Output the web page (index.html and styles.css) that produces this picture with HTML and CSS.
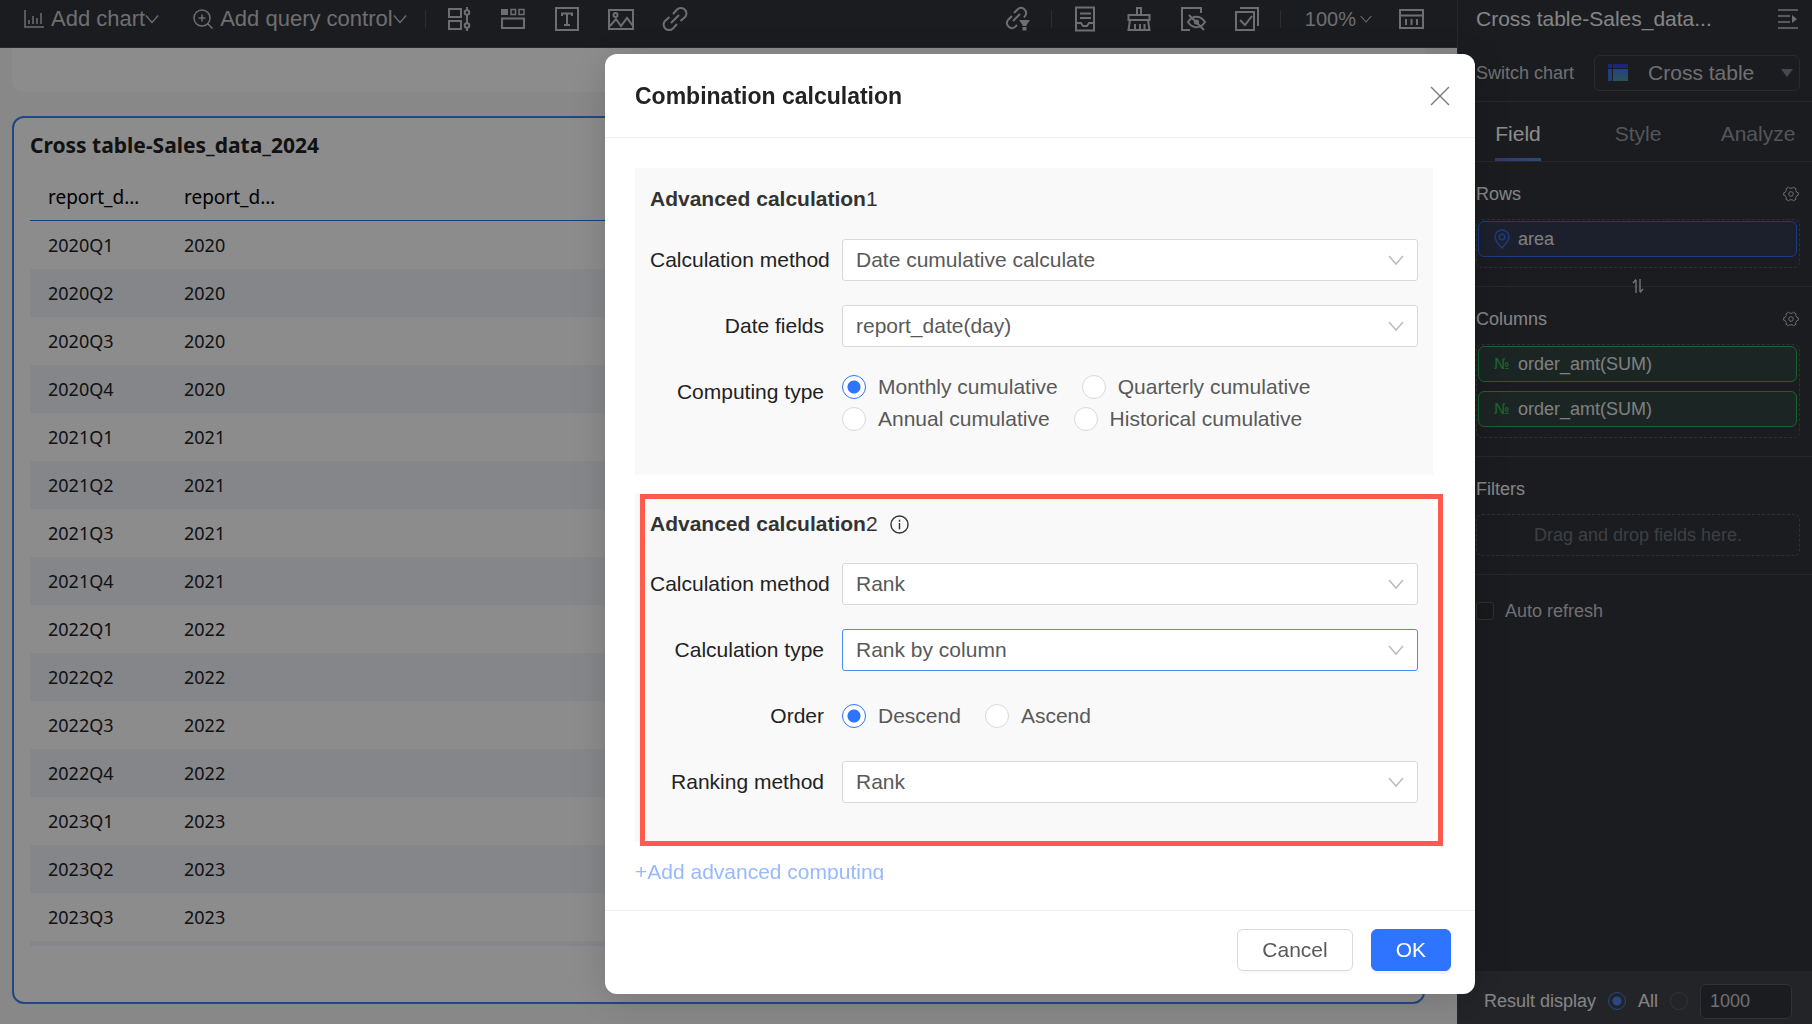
FILE: index.html
```html
<!DOCTYPE html>
<html lang="en">
<head>
<meta charset="utf-8">
<title>Cross table-Sales_data_2024</title>
<link rel="stylesheet" href="styles.css">
</head>
<body>
<svg class="sprite" aria-hidden="true">
  <symbol id="chevron" viewBox="0 0 16 16"><path d="M1 4l7 8 7-8"/></symbol>
  <symbol id="gear" viewBox="0 0 16 16"><path d="M5.6 1.2L6.8 2.2h2.4l1.2-1 2.6 1.5-.3 1.6 1.1 2 1.5.5v2.4l-1.5.5-1.1 2 .3 1.6-2.6 1.5-1.2-1H6.800l-1.200 1L3 13.300l.3-1.600-1.100-2L.7 9.200V6.800l1.500-.5 1.100-2L3 2.700z"/><circle cx="8" cy="8" r="2.300"/></symbol>
</svg>

<div class="app">
  <main class="workspace">
    <header class="toolbar">
      <button class="tool-menu" type="button">
        <svg class="icon-menu" viewBox="0 0 20 20"><path d="M1 1v17h19M5 15v-4M9 15V7M13 15V9M17 15V4"/></svg>
        <span>Add chart</span>
        <svg class="caret"><use href="#chevron"/></svg>
      </button>
      <button class="tool-menu" type="button">
        <svg class="icon-menu" viewBox="0 0 20 20"><circle cx="9" cy="9" r="8"/><path d="M14.500 14.500l5 5M9 5.500v7M5.500 9h7"/></svg>
        <span>Add query control</span>
        <svg class="caret"><use href="#chevron"/></svg>
      </button>
      <i class="sep"></i>
      <div class="tool-icons">
        <button type="button" aria-label="Filter control"><svg viewBox="0 0 26 26"><path d="M3 3h12v8H3zM3 15h12v8H3zM21 1v3M21 9v8M21 22v3"/><circle cx="21" cy="6.500" r="2.300"/><circle cx="21" cy="19.500" r="2.300"/></svg></button>
        <button type="button" aria-label="Tabs"><svg viewBox="0 0 26 26"><path class="solid" d="M1 3h7v6H1z"/><path class="thin" d="M11 3.500h4.500v5H11zM19 3.500h5v5h-5z"/><path d="M2 12.500h22v9.500H2z"/></svg></button>
        <button type="button" aria-label="Text"><svg viewBox="0 0 26 26"><path d="M2 2h22v22H2zM8 10V7.500h10V10M13 7.500V19M10 19h6"/></svg></button>
        <button type="button" aria-label="Picture"><svg viewBox="0 0 26 26"><path d="M1 4h24v19H1zM2 20l6-7 5 7 6-8 6 8"/><circle cx="7.500" cy="9" r="2"/></svg></button>
        <button type="button" aria-label="Link"><svg viewBox="0 0 26 26"><path d="M9 17l8-8M11 8l4-4.500a5.500 5.500 0 0 1 7.800 7.800L18.500 15M15 18l-4 4.500a5.500 5.500 0 0 1-7.800-7.800L7.500 11"/></svg></button>
      </div>
      <div class="tool-right">
        <button type="button" aria-label="Linked filter"><svg viewBox="0 0 26 26"><path d="M8 15l7-7M9 7l4-4a5 5 0 0 1 7 7l-1 1.500M12 19l-2 2a5 5 0 0 1-7-7l4-4"/><path class="solid" d="M14 14h11l-3.500 5v1h-4v-1zM17.500 21h4v3.500h-4z"/></svg></button>
        <i class="sep"></i>
        <div class="tool-icons">
          <button type="button" aria-label="Page"><svg viewBox="0 0 26 26"><path d="M4 1.500h18v23H4zM8 7.500h11M8 12h11M4 17h5l2 3h4l2-3h5"/></svg></button>
          <button type="button" aria-label="Clear"><svg viewBox="0 0 26 26"><path d="M11 9V2h4v7M2.500 14V9h21v5zM4 14L2.500 24h21L22 14M9 24v-6M14 24v-6M18.500 24v-6"/></svg></button>
          <button type="button" aria-label="Hidden items"><svg viewBox="0 0 26 26"><path d="M10 24H2V2h19v5M8 16c4.500-7 12.500-7 17 0-4.500 7-12.500 7-17 0zM9 9l15 15"/><circle class="solid" cx="16.500" cy="16" r="2.600"/></svg></button>
          <button type="button" aria-label="Select"><svg viewBox="0 0 26 26"><path d="M2 6h18v18H2zM6 2h18v18M6 14l5 5 7-9"/></svg></button>
        </div>
        <i class="sep"></i>
        <button class="zoom" type="button"><span>100%</span><svg class="caret-small"><use href="#chevron"/></svg></button>
        <button class="grid-tool" type="button" aria-label="Layout"><svg viewBox="0 0 26 26"><path d="M2 4h23v18H2zM2 9.500h23M8 13v6M13.500 13v6M19 13v6"/></svg></button>
      </div>
    </header>

    <section class="canvas">
      <div class="card-previous"></div>
      <article class="card">
        <h2 class="card-title">Cross table-Sales_data_2024</h2>
        <div class="table-view">
          <table>
            <colgroup><col class="col-key"><col></colgroup>
            <thead><tr><th>report_d…</th><th>report_d…</th></tr></thead>
            <tbody>
              <tr><td>2020Q1</td><td>2020</td></tr>
              <tr><td>2020Q2</td><td>2020</td></tr>
              <tr><td>2020Q3</td><td>2020</td></tr>
              <tr><td>2020Q4</td><td>2020</td></tr>
              <tr><td>2021Q1</td><td>2021</td></tr>
              <tr><td>2021Q2</td><td>2021</td></tr>
              <tr><td>2021Q3</td><td>2021</td></tr>
              <tr><td>2021Q4</td><td>2021</td></tr>
              <tr><td>2022Q1</td><td>2022</td></tr>
              <tr><td>2022Q2</td><td>2022</td></tr>
              <tr><td>2022Q3</td><td>2022</td></tr>
              <tr><td>2022Q4</td><td>2022</td></tr>
              <tr><td>2023Q1</td><td>2023</td></tr>
              <tr><td>2023Q2</td><td>2023</td></tr>
              <tr><td>2023Q3</td><td>2023</td></tr>
              <tr><td></td><td></td></tr>
            </tbody>
          </table>
        </div>
      </article>
    </section>
  </main>

  <aside class="inspector">
    <header class="inspector-head">
      <h2>Cross table-Sales_data...</h2>
      <button type="button" aria-label="Collapse panel"><svg viewBox="0 0 20 20"><path d="M0 1h20M0 7h12M0 13h12M0 19h20"/><path class="solid" d="M14 6l5 4-5 4z"/></svg></button>
    </header>
    <div class="switch-row">
      <label for="chart-type">Switch chart</label>
      <div class="chart-select">
        <svg class="chart-glyph" viewBox="0 0 20 18"><path fill="#3344e0" d="M0 0h4v4H0zM5 0h15v4H5z"/><path fill="#3c6fe0" d="M0 5h4v12H0z"/><path fill="url(#sheet)" d="M5 5h15v12H5z"/><defs><linearGradient id="sheet" x1="0" y1="0" x2="0" y2="1"><stop offset="0" stop-color="#4679ec"/><stop offset="1" stop-color="#4a9aa6"/></linearGradient></defs></svg>
        <select id="chart-type"><option>Cross table</option></select>
        <i class="triangle"></i>
      </div>
    </div>
    <nav class="tabs">
      <button class="tab active" type="button"><span>Field</span></button>
      <button class="tab" type="button"><span>Style</span></button>
      <button class="tab" type="button"><span>Analyze</span></button>
    </nav>
    <section class="zone">
      <header><h3>Rows</h3><svg class="gear"><use href="#gear"/></svg></header>
      <div class="drop">
        <div class="chip dimension"><svg viewBox="0 0 16 20"><path d="M8 19C3 14 1 11 1 8a7 7 0 0 1 14 0c0 3-2 6-7 11z"/><circle cx="8" cy="8" r="2.800"/></svg><span>area</span></div>
      </div>
    </section>
    <section class="zone">
      <svg class="swap" viewBox="0 0 12 16"><path d="M4 15V2M1 5l3-3.500M8 1v13M11 11l-3 3.500"/></svg>
      <header><h3>Columns</h3><svg class="gear"><use href="#gear"/></svg></header>
      <div class="drop">
        <div class="chip measure"><b>№</b><span>order_amt(SUM)</span></div>
        <div class="chip measure"><b>№</b><span>order_amt(SUM)</span></div>
      </div>
    </section>
    <section class="zone">
      <header><h3>Filters</h3></header>
      <div class="drop empty">Drag and drop fields here.</div>
    </section>
    <section class="refresh">
      <label><input type="checkbox"><span>Auto refresh</span></label>
    </section>
    <footer class="result">
      <span>Result display</span>
      <label><input type="radio" name="limit" checked><span>All</span></label>
      <input type="radio" name="limit" aria-label="Limit rows">
      <input class="limit" type="text" value="1000" aria-label="Row limit">
    </footer>
  </aside>
</div>

<div class="overlay">
  <div class="dialog" role="dialog" aria-labelledby="dialog-title">
    <header class="dialog-head">
      <h1 id="dialog-title">Combination calculation</h1>
      <button type="button" aria-label="Close"><svg viewBox="0 0 20 20"><path d="M1 1l18 18M19 1L1 19"/></svg></button>
    </header>
    <div class="dialog-body">
      <div class="dialog-scroll">
        <section class="calc">
          <h2>Advanced calculation<span>1</span></h2>
          <div class="field">
            <label for="method-1">Calculation method</label>
            <div class="select"><select id="method-1"><option>Date cumulative calculate</option></select><svg><use href="#chevron"/></svg></div>
          </div>
          <div class="field">
            <label for="date-field">Date fields</label>
            <div class="select"><select id="date-field"><option>report_date(day)</option></select><svg><use href="#chevron"/></svg></div>
          </div>
          <div class="field">
            <span class="label" id="computing">Computing type</span>
            <div class="radios" role="radiogroup" aria-labelledby="computing">
              <div><label><input type="radio" name="computing" checked><span>Monthly cumulative</span></label><label><input type="radio" name="computing"><span>Quarterly cumulative</span></label></div>
              <div><label><input type="radio" name="computing"><span>Annual cumulative</span></label><label><input type="radio" name="computing"><span>Historical cumulative</span></label></div>
            </div>
          </div>
        </section>
        <section class="calc marked">
          <h2>Advanced calculation<span>2</span><svg class="info" viewBox="0 0 20 20"><circle cx="10" cy="10" r="9"/><path d="M10 8.500V15M10 5v2"/></svg></h2>
          <div class="field">
            <label for="method-2">Calculation method</label>
            <div class="select"><select id="method-2"><option>Rank</option></select><svg><use href="#chevron"/></svg></div>
          </div>
          <div class="field">
            <label for="calc-type">Calculation type</label>
            <div class="select focused"><select id="calc-type"><option>Rank by column</option></select><svg><use href="#chevron"/></svg></div>
          </div>
          <div class="field">
            <span class="label" id="order">Order</span>
            <div class="radios single" role="radiogroup" aria-labelledby="order">
              <div><label><input type="radio" name="order" checked><span>Descend</span></label><label><input type="radio" name="order"><span>Ascend</span></label></div>
            </div>
          </div>
          <div class="field">
            <label for="ranking">Ranking method</label>
            <div class="select"><select id="ranking"><option>Rank</option></select><svg><use href="#chevron"/></svg></div>
          </div>
        </section>
        <a class="add" href="#">+Add advanced computing</a>
      </div>
    </div>
    <footer class="dialog-foot">
      <button class="btn" type="button">Cancel</button>
      <button class="btn primary" type="button">OK</button>
    </footer>
  </div>
</div>
</body>
</html>
```
FILE: styles.css
```css
* { box-sizing: border-box; }

body {
  margin: 0;
  font: 21px/28px "Liberation Sans", Arial, sans-serif;
  color: #222;
  overflow: hidden;
}

h1, h2, h3 { margin: 0; font: inherit; }
button, input, select { margin: 0; font: inherit; color: inherit; }
button { padding: 0; border: 0; background: none; cursor: pointer; }
svg { display: block; flex: none; fill: none; stroke: currentColor; stroke-width: 1.5; }
.solid { fill: currentColor; stroke: none; }
.thin { stroke-width: 1.5; }
.sprite { position: absolute; width: 0; height: 0; }

.app { display: flex; height: 100vh; }
.workspace { flex: 1; min-width: 0; display: flex; flex-direction: column; }

/* Toolbar */
.toolbar {
  display: flex;
  align-items: center;
  height: 48px;
  padding: 0 33px 10px 24px;
  background: #31333a;
  border-bottom: 1px solid #484a52;
  color: #c8c9cc;
}
.tool-menu { display: flex; align-items: center; margin-right: 34px; font-size: 22px; white-space: nowrap; }
.tool-menu + .sep { margin-left: -16px; }
.icon-menu { width: 20px; height: 20px; margin-right: 7px; }
.caret { width: 14px; height: 14px; }
.caret-small { width: 12px; height: 12px; margin-left: 4px; }
.sep { width: 1px; height: 18px; margin: 0 20px; background: #50525a; }
.tool-icons { display: flex; gap: 28px; }
.tool-icons svg, .tool-right > button > svg:not(.caret-small) { width: 26px; height: 26px; stroke-width: 2; }
.tool-right { display: flex; align-items: center; margin-left: auto; }
.zoom { display: flex; align-items: center; margin: 0 26px 0 4px; font-size: 20px; }

/* Canvas */
.canvas {
  flex: 1;
  min-height: 0;
  display: flex;
  flex-direction: column;
  gap: 24px;
  padding: 0 32px 20px 12px;
  background: #f8f8f8;
}
.card-previous { height: 44px; border-radius: 0 0 12px 12px; background: #fff; }
.card {
  flex: 1;
  min-height: 0;
  display: flex;
  flex-direction: column;
  padding: 13px 16px 56px;
  border: 2px solid #4080f0;
  border-radius: 12px;
  background: #fff;
  font-family: "Noto Sans", sans-serif;
}
.card-title { font-size: 21px; font-weight: 700; margin-bottom: 16px; }
.table-view { flex: 1; overflow: hidden; }
table { width: 100%; table-layout: fixed; border-spacing: 0; font-size: 18px; line-height: 24px; }
.col-key { width: 136px; }
th, td { height: 48px; padding: 0 0 0 18px; text-align: left; font-weight: 400; white-space: nowrap; }
th { height: 46px; padding-bottom: 2px; border-bottom: 1px solid #2e6fee; color: #000; font-size: 19px; }
tbody tr:nth-child(even) { background: #f2f5fc; }

/* Inspector */
.inspector {
  width: 355px;
  display: flex;
  flex-direction: column;
  overflow: hidden;
  border-left: 1px solid #484a52;
  background: #31333a;
  color: #cacbce;
  font-size: 18px;
}
.inspector-head {
  display: flex;
  align-items: center;
  justify-content: space-between;
  padding: 5px 14px 0 18px;
  color: #f0f0f2;
  font-size: 21px;
}
.inspector-head svg { width: 20px; height: 20px; color: #c8c9cc; }
.switch-row {
  display: flex;
  align-items: center;
  gap: 20px;
  padding: 22px 12px 10px 18px;
  border-bottom: 1px solid #46484f;
}
.switch-row label { white-space: nowrap; }
.chart-select {
  flex: 1;
  min-width: 0;
  display: flex;
  align-items: center;
  height: 36px;
  padding: 0 6px 0 13px;
  border: 1px solid #4c4e56;
  border-radius: 6px;
  font-size: 21px;
}
.chart-glyph { width: 20px; height: 18px; margin-right: 20px; stroke: none; }
.chart-select select { flex: 1; min-width: 0; border: 0; background: none; appearance: none; }
.triangle { border: 6px solid transparent; border-top: 8px solid #7e8490; border-bottom: 0; }

.tabs {
  display: flex;
  margin-right: -6px;
  border-bottom: 1px solid #46484f;
  color: #999ba1;
  font-size: 21px;
}
.tab { flex: 1; height: 59px; }
.tab span { display: inline-block; height: 59px; padding-top: 18px; border-bottom: 3px solid transparent; }
.tab.active span { color: #fff; border-image: linear-gradient(90deg, #6562c8, #4a8cd0) 1; }

.zone { position: relative; padding: 16px 12px 18px 18px; border-bottom: 1px solid #46484f; }
.zone header { display: flex; align-items: center; justify-content: space-between; height: 32px; margin-bottom: 9px; color: #f0f0f2; }
.zone:has(.swap) { z-index: 1; }
.gear { width: 16px; height: 16px; margin-right: 1px; color: #c8c9cc; stroke-width: 1; }
.swap { position: absolute; top: -9px; left: 18px; right: 12px; width: 12px; height: 16px; margin: 0 auto; }
.drop { padding: 1px; border: 1px dashed #56585f; border-radius: 6px; }
.drop.empty { height: 42px; text-align: center; line-height: 38px; color: #717379; }
.chip { display: flex; align-items: center; height: 36px; margin: 0 1px 9px 0; padding-left: 15px; border: 1px solid; border-radius: 6px; }
.chip span { color: #e6e7ea; }
.chip b, .chip svg { width: 16px; margin-right: 8px; }
.chip svg { height: 20px; }
.chip b { font: 400 15px/20px "DejaVu Sans", sans-serif; color: #32b454; }
.dimension { color: #2e6fee; background: #333b52; }
.measure { color: #32b454; background: #324440; }

.refresh { padding: 22px 18px; }
.refresh label { display: inline-flex; align-items: center; gap: 11px; }
.refresh input { appearance: none; width: 18px; height: 18px; border: 1px solid #54565e; border-radius: 3px; background: #2c2e33; }

.result {
  display: flex;
  align-items: center;
  gap: 12px;
  height: 53px;
  margin-top: auto;
  padding: 7px 20px 0 26px;
  background: #404249;
  color: #f0f0f2;
  white-space: nowrap;
}
.result label { display: flex; align-items: center; gap: 12px; }
.result input[type="radio"] { width: 18px; height: 18px; flex: none; border-color: #5c5e66; background: #404249; }
.result input[type="radio"]:checked { border-color: #4d80f0; background: radial-gradient(circle, #4d80f0 4px, #404249 5px); }
.result .limit { flex: 1; min-width: 0; height: 35px; padding: 0 9px; border: 1px solid #5a5c64; border-radius: 6px; background: #31333a; color: #cacbce; }

/* Dialog */
.overlay {
  position: fixed;
  inset: 0;
  z-index: 10;
  display: flex;
  justify-content: flex-end;
  padding: 54px 337px 30px 0;
  background: rgba(0, 0, 0, .45);
}
.dialog {
  display: flex;
  flex-direction: column;
  width: 870px;
  border-radius: 12px;
  background: #fff;
  box-shadow: 0 6px 40px rgba(0, 0, 0, .16);
}
.dialog-head {
  display: flex;
  align-items: center;
  justify-content: space-between;
  height: 84px;
  padding: 0 25px 0 30px;
  border-bottom: 1px solid #f0f0f0;
}
.dialog-head h1 { font-size: 23px; font-weight: 700; }
.dialog-head svg { width: 20px; height: 20px; color: #808080; }
.dialog-body { flex: 1; min-height: 0; padding: 30px 42px 30px 30px; }
.dialog-scroll { height: 100%; overflow: hidden; margin-right: -12px; padding-right: 12px; }
.calc { position: relative; padding: 17px 15px 16px; margin-bottom: 18px; background: #f9f9f9; }
.calc h2 { display: flex; align-items: center; font-weight: 700; color: #333; margin-bottom: 26px; }
.calc h2 span { font-weight: 400; }
.calc h2 .info { width: 19px; height: 19px; margin-left: 12px; }
.marked { margin-bottom: 16px; padding-bottom: 15px; }
.marked h2 { margin-bottom: 25px; }
.marked::after {
  content: "";
  position: absolute;
  inset: 1px -10px -4px 5px;
  border: 5px solid #ff5b4c;
}
.field { display: flex; margin-bottom: 24px; }
.field > label, .label { width: 192px; padding-right: 18px; line-height: 42px; text-align: right; white-space: nowrap; }
.select { flex: 1; display: grid; align-items: center; }
.select > * { grid-area: 1 / 1; }
.select select { width: 100%; height: 42px; padding: 0 48px 0 13px; border: 1px solid #d9d9d9; border-radius: 3px; background: #fff; color: #595959; appearance: none; }
.select.focused select { border-color: #4a8cf0; }
.select svg { justify-self: end; width: 16px; height: 16px; margin-right: 14px; color: #bbb; pointer-events: none; }
input[type="radio"] { appearance: none; width: 24px; height: 24px; border: 1px solid #d9d9d9; border-radius: 50%; background: #fff; }
input[type="radio"]:checked { border-color: #2e74ff; background: radial-gradient(circle, #2e74ff 6px, #fff 7px); }
.radios { color: #595959; }
.radios > div { display: flex; height: 32px; }
.radios.single > div { height: 42px; }
.radios label { display: flex; align-items: center; gap: 12px; margin-right: 24px; white-space: nowrap; }
.add { display: block; color: #98b8ff; text-decoration: none; }
.dialog-foot {
  display: flex;
  justify-content: flex-end;
  align-items: flex-start;
  gap: 18px;
  height: 84px;
  padding: 18px 24px 0;
  border-top: 1px solid #f0f0f0;
}
.btn { height: 42px; padding: 0 24px; border: 1px solid #d9d9d9; border-radius: 6px; background: #fff; color: #595959; box-shadow: 0 3px 0 rgba(0, 0, 0, .02); }
.btn.primary { border-color: #2e74ff; background: #2e74ff; color: #fff; box-shadow: 0 3px 0 rgba(0, 0, 0, .04); }
```
